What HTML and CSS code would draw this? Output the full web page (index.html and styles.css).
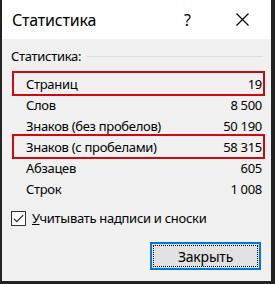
FILE: index.html
```html
<!DOCTYPE html>
<html lang="ru">
<head>
    <meta charset="UTF-8">
    <title>Статистика</title>
    <link rel="stylesheet" href="styles.css">
</head>
<body>
<div class="dialog">
    <div class="titlebar">
        <span class="title">Статистика</span>
        <span class="help">?</span>
        <span class="close">
            <svg width="13" height="13" viewBox="0 0 13 13">
                <path d="M0.5 0.5 L12.5 12.5 M12.5 0.5 L0.5 12.5" stroke="#000" stroke-width="1.2" fill="none"/>
            </svg>
        </span>
    </div>
    <div class="body">
        <div class="group">
            <span>Статистика:</span>
            <div class="rule"></div>
        </div>
        <div class="stats">
            <div class="row mark"><span>Страниц</span><span>19</span></div>
            <div class="row"><span>Слов</span><span>8 500</span></div>
            <div class="row"><span>Знаков (без пробелов)</span><span>50 190</span></div>
            <div class="row mark"><span>Знаков (с пробелами)</span><span>58 315</span></div>
            <div class="row"><span>Абзацев</span><span>605</span></div>
            <div class="row"><span>Строк</span><span>1 008</span></div>
        </div>
        <label class="check">
            <span class="box">
                <svg width="11" height="9" viewBox="0 0 11 9">
                    <path d="M0.8 4.6 L3.8 7.6 L10.2 1.2" stroke="#222" stroke-width="1.2" fill="none"/>
                </svg>
            </span>
            <span><u>У</u>читывать надписи и сноски</span>
        </label>
        <div class="buttons">
            <button class="btn"><span>Закрыть</span></button>
        </div>
    </div>
</div>
</body>
</html>
```

FILE: styles.css
```css
* {
    margin: 0;
    padding: 0;
    box-sizing: border-box;
}

body {
    background: #222;
    font-family: "Noto Sans", "Open Sans", sans-serif;
    font-size: 13px;
    letter-spacing: -0.3px;
    color: #000;
}

.dialog {
    width: 269px;
    height: 281px;
    margin-left: 2px;
    background: #f0f0f0;
}

.titlebar {
    height: 39px;
    background: #fff;
    display: flex;
    align-items: center;
    padding-left: 10px;
}

.title {
    font-size: 16px;
    letter-spacing: -0.2px;
    flex: 1;
}

.help {
    font-size: 16px;
    width: 52px;
}

.close {
    width: 35px;
    display: flex;
    align-items: center;
}

.body {
    padding: 8px 6px 0 9px;
}

.group {
    display: flex;
    align-items: center;
    height: 18px;
}

.group .rule {
    flex: 1;
    height: 1px;
    background: #dcdcdc;
    margin: 0 2px 0 6px;
}

.stats {
    padding: 8px 2px 0 3px;
}

.row {
    position: relative;
    display: flex;
    justify-content: space-between;
    height: 21px;
    align-items: center;
    padding: 0 1px 0 12px;
}

.row.mark::after {
    content: "";
    position: absolute;
    top: -2px;
    bottom: -2px;
    left: -2px;
    right: -2px;
    border: 2px solid #cc0a14;
}

.check {
    display: flex;
    align-items: center;
    margin-top: 10px;
    height: 18px;
}

.box {
    width: 15px;
    height: 15px;
    border: 1px solid #333;
    background: #fff;
    display: flex;
    align-items: center;
    justify-content: center;
    margin-right: 6px;
}

.buttons {
    display: flex;
    justify-content: flex-end;
    margin-top: 15px;
    padding-right: 4px;
}

.btn {
    width: 111px;
    height: 28px;
    border: 2px solid #0078d7;
    background: #e1e1e1;
    font-family: inherit;
    font-size: 14px;
    letter-spacing: -0.2px;
    padding: 1px;
}

.btn span {
    display: flex;
    align-items: center;
    justify-content: center;
    height: 100%;
    border: 1px dotted #000;
}
```
